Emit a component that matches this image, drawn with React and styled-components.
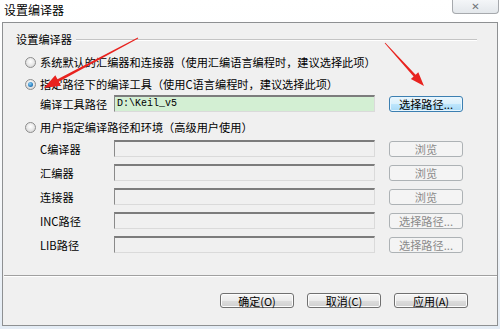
import React from "react";
import styled, { createGlobalStyle } from "styled-components";

const GlobalStyle = createGlobalStyle`
  html, body {
    margin: 0;
    padding: 0;
    background: #f7f9fb;
  }
  body {
    font-family: "Noto Sans CJK SC", "Noto Sans", sans-serif;
    color: #000;
  }
`;

const Window = styled.div`
  position: relative;
  width: 500px;
  height: 329px;
  display: flex;
  flex-direction: column;
  background: linear-gradient(180deg, #ffffff 0%, #f6f8fa 60%, #e4ecf5 100%);
  overflow: hidden;
`;

const TitleBar = styled.div`
  height: 22px;
  display: flex;
  align-items: flex-start;
  justify-content: space-between;
`;

const Title = styled.div`
  font-size: 12px;
  line-height: 12px;
  padding: 4px 0 0 4px;
`;

const CloseButton = styled.div`
  width: 45px;
  height: 13px;
  margin-right: 1px;
  border: 1px solid #a6a9ad;
  border-top: none;
  border-radius: 0 0 4px 4px;
  background: linear-gradient(180deg, #f4f6f8, #e3e7eb);
  display: flex;
  align-items: center;
  justify-content: center;
  color: #6f7378;
  font-size: 10px;
  line-height: 10px;
  font-family: "DejaVu Sans", sans-serif;
  font-weight: bold;
`;

const Body = styled.div`
  height: 302px;
  margin: 0 2px;
  border: 1px solid #8e9092;
  background: #f0f0f0;
  display: flex;
  flex-direction: column;
`;

const Group = styled.div`
  padding-top: 10px;
  display: flex;
  flex-direction: column;
`;

const GroupHeader = styled.div`
  display: flex;
  align-items: center;
  height: 12px;
  padding: 0 20px 0 13px;
  gap: 4px;
  font-size: 11.2px;
  line-height: 12px;
`;

const HeaderLine = styled.div`
  flex: 1;
  height: 1px;
  background: #c4c4c4;
  box-shadow: 0 1px 0 #ffffff;
`;

const RadioRow = styled.div`
  display: flex;
  align-items: center;
  height: 20px;
  margin-top: ${(p) => p.$top}px;
  padding-left: 22px;
  gap: 4px;
  font-size: 11.2px;
  white-space: nowrap;
`;

const RadioDot = styled.span`
  width: 11px;
  height: 11px;
  box-sizing: border-box;
  border-radius: 50%;
  border: 1px solid #8d8d8d;
  background: radial-gradient(circle at 50% 40%, #ffffff 0%, #e6e6e6 55%, #c9c9c9 100%);
  display: flex;
  align-items: center;
  justify-content: center;
  &::after {
    content: "";
    display: ${(p) => (p.$checked ? "block" : "none")};
    width: 5px;
    height: 5px;
    border-radius: 50%;
    background: radial-gradient(circle at 40% 35%, #8fd1f5 0%, #2a7fc0 60%, #134f8a 100%);
  }
`;

const FieldRow = styled.div`
  display: flex;
  align-items: center;
  height: 17px;
  margin-top: ${(p) => p.$top}px;
  padding-left: 37px;
`;

const FieldLabel = styled.div`
  width: 74px;
  font-size: 11.2px;
  line-height: 12px;
  white-space: nowrap;
`;

const Field = styled.div`
  width: 261px;
  height: 17px;
  box-sizing: border-box;
  border: 1px solid #dadada;
  border-top: 2px solid #7c7c7c;
  border-left: 1px solid #8a8a8a;
  background: ${(p) => (p.$active ? "#d3efd3" : "#f0f0f0")};
  font-family: "Liberation Mono", monospace;
  font-size: 10px;
  line-height: 13px;
  padding-left: 2px;
`;

const SmallButton = styled.div`
  width: 74px;
  height: 16px;
  box-sizing: border-box;
  margin-left: 14px;
  border-radius: 3px;
  display: flex;
  align-items: center;
  justify-content: center;
  font-size: 11.2px;
  line-height: 12px;
  white-space: nowrap;
  border: 1px solid ${(p) => (p.$hot ? "#3c7fb1" : "#adb2b5")};
  background: ${(p) =>
    p.$hot
      ? "linear-gradient(180deg, #eaf6fd 0%, #d9f0fc 50%, #bee6fd 51%, #a7d9f5 100%)"
      : "#f4f4f4"};
  color: ${(p) => (p.$hot ? "#000" : "#8a8a8a")};
  box-shadow: ${(p) => (p.$hot ? "inset 0 0 0 1px #e8f6fe" : "none")};
`;

const Separator = styled.div`
  height: 1px;
  margin-top: 22px;
  margin-left: 1px;
  background: #a0a0a0;
  box-shadow: 0 1px 0 #ffffff;
`;

const ButtonBar = styled.div`
  display: flex;
  justify-content: flex-end;
  gap: 13px;
  margin-top: 17px;
  padding-right: 29px;
`;

const DialogButton = styled.div`
  width: 74px;
  height: 15px;
  box-sizing: border-box;
  border: 1px solid #707070;
  border-radius: 3px;
  background: linear-gradient(180deg, #f6f6f6 0%, #ebebeb 50%, #dddddd 51%, #d0d0d0 100%);
  box-shadow: inset 0 0 0 1px #fcfcfc;
  display: flex;
  align-items: center;
  justify-content: center;
  font-size: 11px;
  line-height: 12px;
`;

const Overlay = styled.svg`
  position: absolute;
  left: 0;
  top: 0;
  pointer-events: none;
`;

const arrowPoints = (tail, tip, head, half, w0, w1) => {
  const dx = tip[0] - tail[0];
  const dy = tip[1] - tail[1];
  const len = Math.hypot(dx, dy);
  const ux = dx / len;
  const uy = dy / len;
  const px = -uy;
  const py = ux;
  const bx = tip[0] - head * ux;
  const by = tip[1] - head * uy;
  const pts = [
    [tail[0] + w0 * px, tail[1] + w0 * py],
    [bx + w1 * px, by + w1 * py],
    [bx + half * px, by + half * py],
    tip,
    [bx - half * px, by - half * py],
    [bx - w1 * px, by - w1 * py],
    [tail[0] - w0 * px, tail[1] - w0 * py],
  ];
  return pts.map((p) => `${p[0].toFixed(1)},${p[1].toFixed(1)}`).join(" ");
};

const Arrow = ({ tail, tip, head = 15, half = 6 }) => (
  <polygon points={arrowPoints(tail, tip, head, half, 0.4, 1.4)} fill="#e8231f" />
);

const fields = [
  { label: "C编译器", button: "浏览" },
  { label: "汇编器", button: "浏览" },
  { label: "连接器", button: "浏览" },
  { label: "INC路径", button: "选择路径..." },
  { label: "LIB路径", button: "选择路径..." },
];

const App = () => (
  <>
    <GlobalStyle />
    <Window>
      <TitleBar>
        <Title>设置编译器</Title>
        <CloseButton>✕</CloseButton>
      </TitleBar>
      <Body>
        <Group>
          <GroupHeader>
            <span>设置编译器</span>
            <HeaderLine />
          </GroupHeader>
          <RadioRow $top={7}>
            <RadioDot />
            系统默认的汇编器和连接器（使用汇编语言编程时，建议选择此项）
          </RadioRow>
          <RadioRow $top={2}>
            <RadioDot $checked />
            指定路径下的编译工具（使用C语言编程时，建议选择此项）
          </RadioRow>
          <FieldRow $top={1}>
            <FieldLabel>编译工具路径</FieldLabel>
            <Field $active>D:\Keil_v5</Field>
            <SmallButton $hot>选择路径...</SmallButton>
          </FieldRow>
          <RadioRow $top={5}>
            <RadioDot />
            用户指定编译路径和环境（高级用户使用）
          </RadioRow>
          {fields.map((f, i) => (
            <FieldRow key={f.label} $top={i === 0 ? 3 : 7}>
              <FieldLabel>{f.label}</FieldLabel>
              <Field />
              <SmallButton>{f.button}</SmallButton>
            </FieldRow>
          ))}
        </Group>
        <Separator />
        <ButtonBar>
          <DialogButton>确定(O)</DialogButton>
          <DialogButton>取消(C)</DialogButton>
          <DialogButton>应用(A)</DialogButton>
        </ButtonBar>
      </Body>
      <Overlay width="500" height="329" viewBox="0 0 500 329">
        <Arrow tail={[138, 38]} tip={[44, 88]} head={16} half={6} />
        <Arrow tail={[385, 43]} tip={[424, 86]} head={14} half={5} />
      </Overlay>
    </Window>
  </>
);

export default App;
